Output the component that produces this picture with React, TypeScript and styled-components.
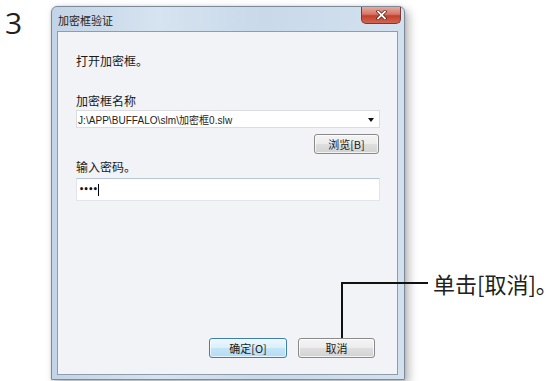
import React from "react";
import styled, { createGlobalStyle } from "styled-components";

const Global = createGlobalStyle`
  html, body { margin: 0; padding: 0; background: #ffffff; }
  body { font-family: "Noto Sans CJK SC", "Liberation Sans", sans-serif; }
`;

const UI_FONT = `"Liberation Sans", "Noto Sans CJK SC", sans-serif`;

const Page = styled.div`
  position: relative;
  width: 557px;
  height: 381px;
  display: flex;
  align-items: flex-start;
  padding-top: 6px;
  box-sizing: border-box;
  overflow: hidden;
`;

const StepNumber = styled.div`
  width: 51px;
  padding-left: 5px;
  box-sizing: border-box;
  font-family: "Open Sans", sans-serif;
  font-weight: 400;
  font-size: 30px;
  line-height: 1;
  margin-top: 2px;
  color: #231f20;
`;

const Window = styled.div`
  width: 354px;
  height: 374px;
  display: flex;
  flex-direction: column;
  box-sizing: border-box;
  border: 1px solid #7d8b99;
  border-radius: 6px 6px 0 0;
  background: linear-gradient(90deg, #c2d4e7 0%, #d6e3f0 30%, #c9d9ea 60%, #d3e1ef 100%);
  box-shadow: 4px 4px 10px rgba(0, 0, 0, 0.28), 0 0 3px rgba(0, 0, 0, 0.15);
  padding: 0 6px 4px 5px;
`;

const TitleBar = styled.div`
  height: 24px;
  display: flex;
  align-items: flex-start;
  justify-content: space-between;
`;

const Title = styled.div`
  font-family: "Noto Sans CJK SC", sans-serif;
  font-size: 11px;
  line-height: 13px;
  color: #1e1e1e;
  padding: 7px 0 0 1px;
`;

const CloseButton = styled.div`
  width: 40px;
  height: 17px;
  margin-right: -3px;
  border: 1px solid #7a3a34;
  border-top: none;
  border-radius: 0 0 5px 5px;
  background: linear-gradient(180deg, #e7a99f 0%, #d67666 45%, #c2402c 55%, #d2664f 100%);
  display: flex;
  align-items: center;
  justify-content: center;
  box-sizing: border-box;
`;

const Client = styled.div`
  flex: 1;
  background: #f1f3f6;
  border: 1px solid #8e9cab;
  display: flex;
  flex-direction: column;
  padding: 21px 17px 16px 18px;
  font-family: "Noto Sans CJK SC", sans-serif;
  font-size: 12px;
  color: #1a1a1a;
`;

const Label = styled.div<{ $mt?: number }>`
  font-size: 12px;
  line-height: 16px;
  margin-top: ${(p) => p.$mt ?? 0}px;
`;

const Combo = styled.div`
  height: 18px;
  margin-top: 1px;
  background: #ffffff;
  border: 1px solid #d9dde2;
  box-sizing: border-box;
  display: flex;
  align-items: center;
  justify-content: space-between;
  padding: 0 5px 0 1px;
  font-family: ${UI_FONT};
  font-size: 10px;
  color: #222;
  letter-spacing: 0.05px;
`;

const Arrow = styled.div`
  width: 0;
  height: 0;
  border-left: 3.5px solid transparent;
  border-right: 3.5px solid transparent;
  border-top: 4px solid #111;
  margin-top: 2px;
`;

const RightRow = styled.div`
  display: flex;
  justify-content: flex-end;
  margin-top: 6px;
  padding-right: 1px;
`;

const Button = styled.div<{ $w: number; $primary?: boolean }>`
  width: ${(p) => p.$w}px;
  height: 20px;
  box-sizing: border-box;
  border: 1px solid ${(p) => (p.$primary ? "#3c7fb1" : "#8a8a8a")};
  border-radius: 3px;
  background: ${(p) =>
    p.$primary
      ? "linear-gradient(180deg, #eef7fd 0%, #dcefFA 48%, #c4e4f7 52%, #b3dcf5 100%)"
      : "linear-gradient(180deg, #f4f4f4 0%, #ececec 48%, #dedede 52%, #d2d2d2 100%)"};
  box-shadow: inset 0 0 0 1px rgba(255, 255, 255, 0.7);
  display: flex;
  align-items: center;
  justify-content: center;
  font-family: "Noto Sans CJK SC", sans-serif;
  font-size: 11px;
  color: #1a1a1a;
`;

const PasswordField = styled.div`
  height: 23px;
  margin-top: 3px;
  background: #ffffff;
  border: 1px solid #e0e5ec;
  border-top-color: #b7c6d8;
  box-sizing: border-box;
  display: flex;
  align-items: center;
  padding-left: 2px;
  font-family: "DejaVu Sans", sans-serif;
  font-size: 8px;
  font-weight: bold;
  color: #111;
  letter-spacing: -0.5px;
`;

const Caret = styled.span`
  display: inline-block;
  width: 1px;
  height: 12px;
  background: #000;
  margin-left: 1px;
`;

const ButtonRow = styled.div`
  margin-top: auto;
  display: flex;
  justify-content: flex-end;
  gap: 11px;
  padding-right: 5px;
`;

const Callout = styled.div`
  position: absolute;
  left: 341px;
  top: 282px;
  display: flex;
  align-items: flex-start;
`;

const Leader = styled.div`
  width: 87px;
  height: 56px;
  border-top: 2px solid #111;
  border-left: 2px solid #111;
  box-sizing: border-box;
`;

const CalloutText = styled.div`
  margin-left: 5px;
  margin-top: -12px;
  font-family: "Noto Sans CJK SC", sans-serif;
  font-size: 22px;
  line-height: 26px;
  color: #231f20;
  white-space: nowrap;
`;

export default function App() {
  return (
    <>
      <Global />
      <Page>
        <StepNumber>3</StepNumber>
        <Window>
          <TitleBar>
            <Title>加密框验证</Title>
            <CloseButton>
              <svg width="11" height="10" viewBox="0 0 11 10">
                <path d="M2 1.5 L9 8.5 M9 1.5 L2 8.5" stroke="#5a1a12" strokeWidth="3.2" strokeLinecap="square" />
                <path d="M2 1.5 L9 8.5 M9 1.5 L2 8.5" stroke="#ffffff" strokeWidth="1.8" strokeLinecap="square" />
              </svg>
            </CloseButton>
          </TitleBar>
          <Client>
            <Label>打开加密框。</Label>
            <Label $mt={24}>加密框名称</Label>
            <Combo>
              <span>J:\APP\BUFFALO\slm\加密框0.slw</span>
              <Arrow />
            </Combo>
            <RightRow>
              <Button $w={65}>浏览[B]</Button>
            </RightRow>
            <Label $mt={5}>输入密码。</Label>
            <PasswordField>
              ••••<Caret />
            </PasswordField>
            <ButtonRow>
              <Button $w={78} $primary>
                确定[O]
              </Button>
              <Button $w={77}>取消</Button>
            </ButtonRow>
          </Client>
        </Window>
        <Callout>
          <Leader />
          <CalloutText>单击[取消]。</CalloutText>
        </Callout>
      </Page>
    </>
  );
}
